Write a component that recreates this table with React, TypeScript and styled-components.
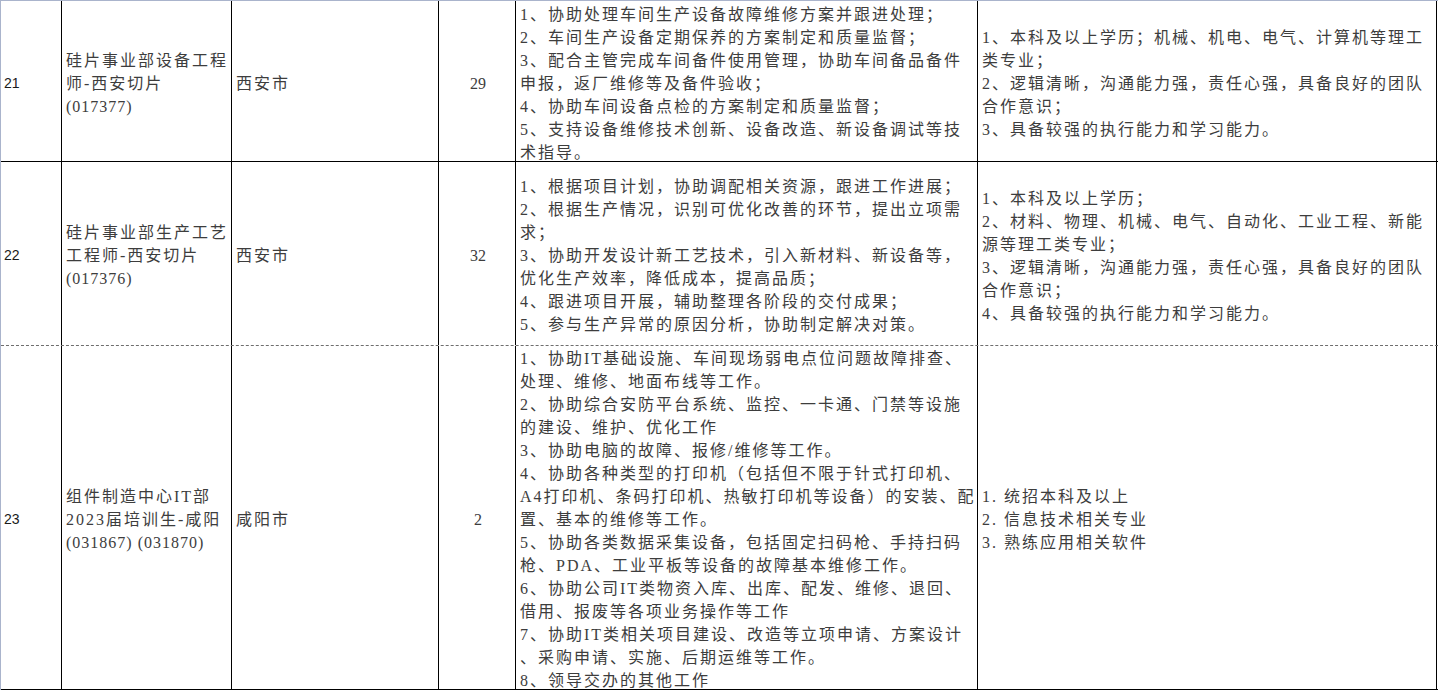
import React from "react";
import styled, { createGlobalStyle } from "styled-components";

const GlobalStyle = createGlobalStyle`
  html, body {
    margin: 0;
    padding: 0;
    background: #ffffff;
  }
`;

const COLUMNS = "61px 170px 207px 77px 462px 459px";

const Sheet = styled.div`
  width: 1437px;
  border-top: 1px solid #aab4cc;
  border-left: 1px solid #aab4cc;
  font-family: "Liberation Serif", "Noto Sans CJK SC", serif;
  font-size: 16px;
  letter-spacing: 2px;
  color: #3d3d3d;
  box-sizing: content-box;
`;

const Row = styled.div<{ $height: number; $dashed?: boolean }>`
  display: grid;
  grid-template-columns: ${COLUMNS};
  height: ${(p) => p.$height}px;
  box-sizing: border-box;
  border-bottom: 1px ${(p) => (p.$dashed ? "dashed #6e6e6e" : "solid #000")};
`;

const Cell = styled.div<{ $center?: boolean }>`
  box-sizing: border-box;
  border-right: 1px solid #000;
  display: flex;
  flex-direction: column;
  justify-content: center;
  align-items: ${(p) => (p.$center ? "center" : "flex-start")};
  padding: 4px 3px 0 4px;
  overflow: hidden;
  line-height: 23px;
`;

const IndexCell = styled(Cell)`
  font-family: "Liberation Sans", Arial, sans-serif;
  font-size: 14px;
  letter-spacing: 0;
  color: #1a1a1a;
  padding-left: 3px;
`;

const CountCell = styled(Cell)`
  letter-spacing: 0;
  padding: 4px 0 0 2px;
`;

const Line = styled.div`
  white-space: nowrap;
`;

const TightLine = styled(Line)`
  letter-spacing: 1px;
`;

type Job = {
  no: number;
  title: string[];
  city: string;
  count: number;
  duties: string[];
  reqs: string[];
  height: number;
  dashed?: boolean;
};

const JOBS: Job[] = [
  {
    no: 21,
    title: ["硅片事业部设备工程", "师-西安切片", "(017377)"],
    city: "西安市",
    count: 29,
    duties: [
      "1、协助处理车间生产设备故障维修方案并跟进处理；",
      "2、车间生产设备定期保养的方案制定和质量监督；",
      "3、配合主管完成车间备件使用管理，协助车间备品备件",
      "申报，返厂维修等及备件验收；",
      "4、协助车间设备点检的方案制定和质量监督；",
      "5、支持设备维修技术创新、设备改造、新设备调试等技",
      "术指导。",
    ],
    reqs: [
      "1、本科及以上学历；机械、机电、电气、计算机等理工",
      "类专业；",
      "2、逻辑清晰，沟通能力强，责任心强，具备良好的团队",
      "合作意识；",
      "3、具备较强的执行能力和学习能力。",
    ],
    height: 161,
  },
  {
    no: 22,
    title: ["硅片事业部生产工艺", "工程师-西安切片", "(017376)"],
    city: "西安市",
    count: 32,
    duties: [
      "1、根据项目计划，协助调配相关资源，跟进工作进展；",
      "2、根据生产情况，识别可优化改善的环节，提出立项需",
      "求；",
      "3、协助开发设计新工艺技术，引入新材料、新设备等，",
      "优化生产效率，降低成本，提高品质；",
      "4、跟进项目开展，辅助整理各阶段的交付成果；",
      "5、参与生产异常的原因分析，协助制定解决对策。",
    ],
    reqs: [
      "1、本科及以上学历；",
      "2、材料、物理、机械、电气、自动化、工业工程、新能",
      "源等理工类专业；",
      "3、逻辑清晰，沟通能力强，责任心强，具备良好的团队",
      "合作意识；",
      "4、具备较强的执行能力和学习能力。",
    ],
    height: 184,
    dashed: true,
  },
  {
    no: 23,
    title: ["组件制造中心IT部", "2023届培训生-咸阳", "(031867) (031870)"],
    city: "咸阳市",
    count: 2,
    duties: [
      "1、协助IT基础设施、车间现场弱电点位问题故障排查、",
      "处理、维修、地面布线等工作。",
      "2、协助综合安防平台系统、监控、一卡通、门禁等设施",
      "的建设、维护、优化工作",
      "3、协助电脑的故障、报修/维修等工作。",
      "4、协助各种类型的打印机（包括但不限于针式打印机、",
      "A4打印机、条码打印机、热敏打印机等设备）的安装、配",
      "置、基本的维修等工作。",
      "5、协助各类数据采集设备，包括固定扫码枪、手持扫码",
      "枪、PDA、工业平板等设备的故障基本维修工作。",
      "6、协助公司IT类物资入库、出库、配发、维修、退回、",
      "借用、报废等各项业务操作等工作",
      "7、协助IT类相关项目建设、改造等立项申请、方案设计",
      "、采购申请、实施、后期运维等工作。",
      "8、领导交办的其他工作",
    ],
    reqs: ["1. 统招本科及以上", "2. 信息技术相关专业", "3. 熟练应用相关软件"],
    height: 344,
  },
];

// code lines like "(017377)" sit tighter than the CJK text
const isCode = (t: string) => /^[()\d\s]+$/.test(t);

function Lines({ items }: { items: string[] }) {
  return (
    <>
      {items.map((t, i) =>
        isCode(t) ? <TightLine key={i}>{t}</TightLine> : <Line key={i}>{t}</Line>
      )}
    </>
  );
}

export default function App() {
  return (
    <>
      <GlobalStyle />
      <Sheet>
        {JOBS.map((job) => (
          <Row key={job.no} $height={job.height} $dashed={job.dashed}>
            <IndexCell>{job.no}</IndexCell>
            <Cell>
              <Lines items={job.title} />
            </Cell>
            <Cell>
              <Line>{job.city}</Line>
            </Cell>
            <CountCell $center>{job.count}</CountCell>
            <Cell>
              <Lines items={job.duties} />
            </Cell>
            <Cell>
              <Lines items={job.reqs} />
            </Cell>
          </Row>
        ))}
      </Sheet>
    </>
  );
}
